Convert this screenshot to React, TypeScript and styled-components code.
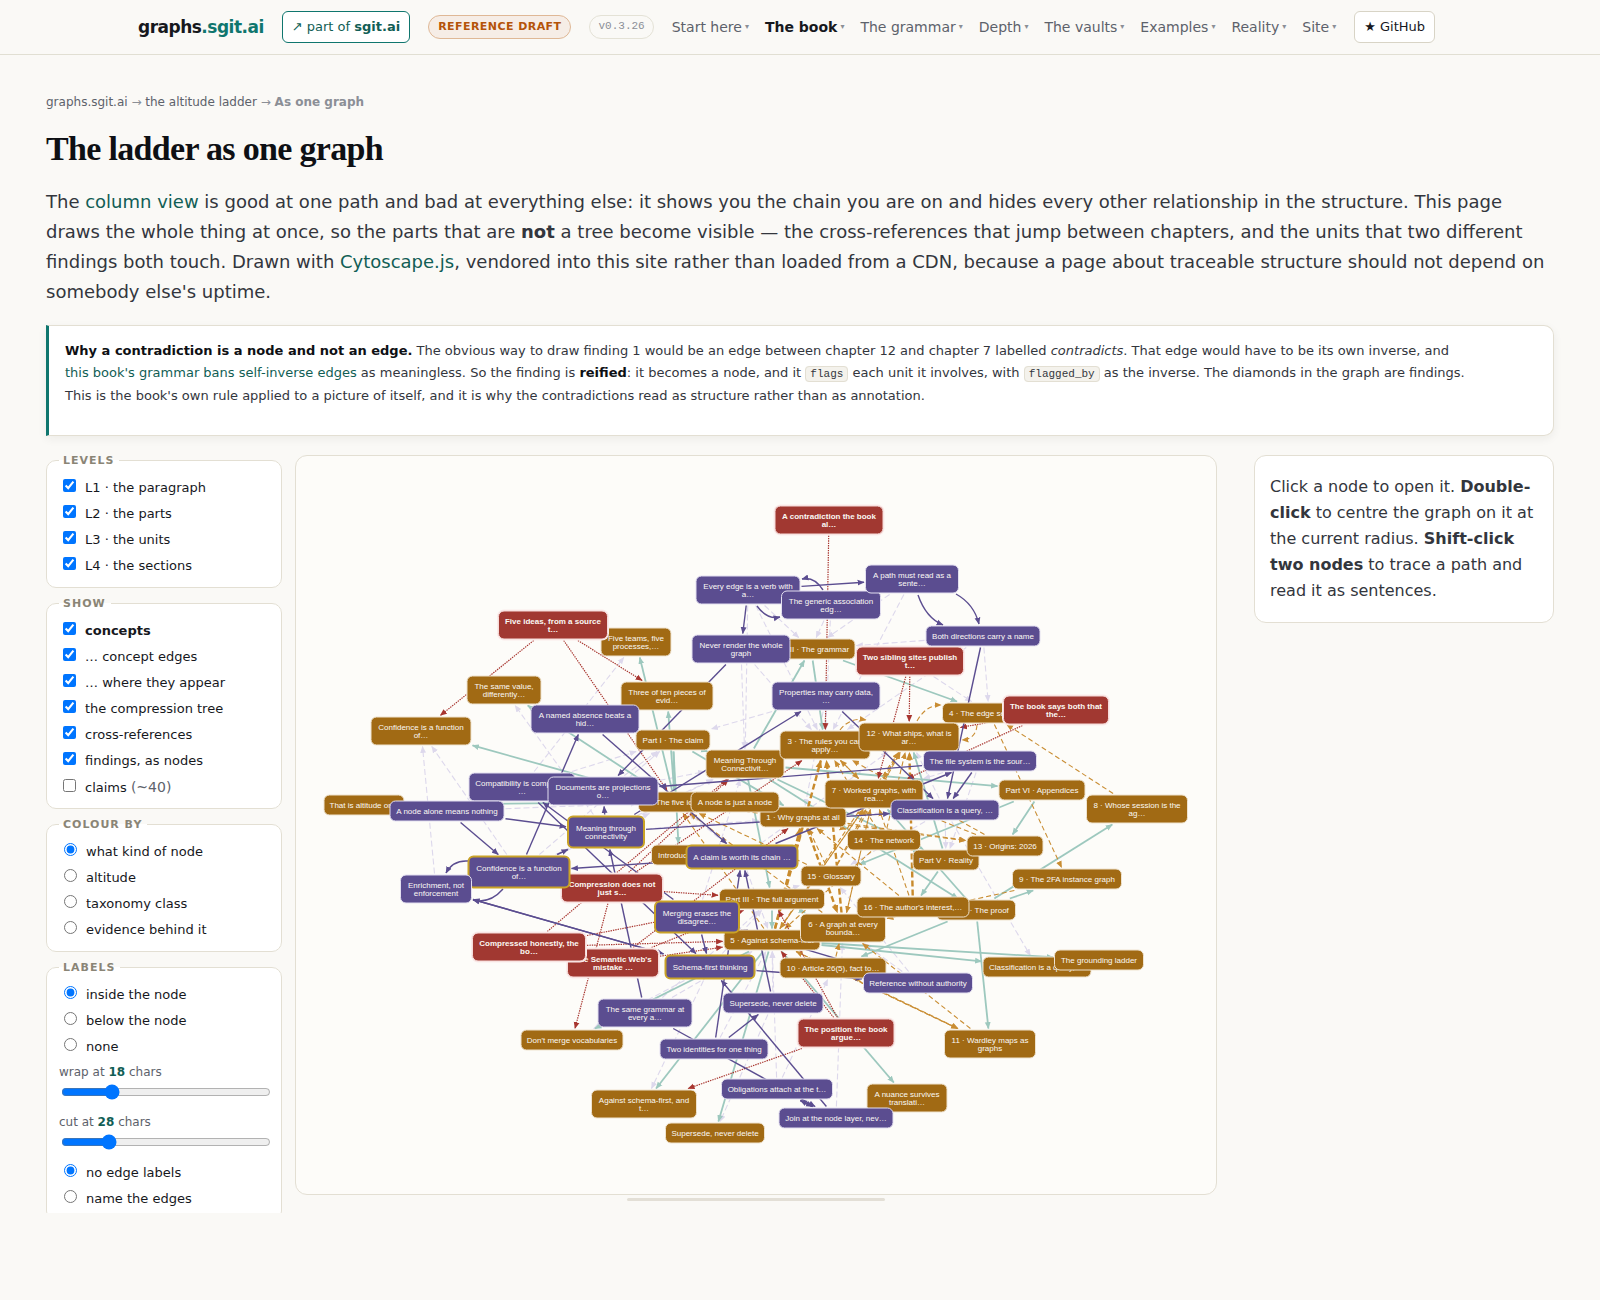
import React, { useState } from "react";
import styled, { createGlobalStyle, css } from "styled-components";

const sans = `"DejaVu Sans", "Liberation Sans", sans-serif`;
const mono = `"Liberation Mono", "DejaVu Sans Mono", monospace`;

const color = {
  page: "#faf9f6",
  card: "#ffffff",
  line: "#e3dfd3",
  ink: "#16181d",
  body: "#33363d",
  muted: "#5d626b",
  faint: "#8b8f96",
  teal: "#0f766e",
  tealDark: "#115e55",
};

const GlobalStyle = createGlobalStyle`
  *, *::before, *::after { box-sizing: border-box; }
  body {
    margin: 0;
    background: ${color.page};
    color: ${color.ink};
    font-family: ${sans};
    font-size: 16px;
    line-height: 26px;
  }
  a { color: ${color.tealDark}; text-decoration: none; }
`;

/* ---------- header ---------- */

const Header = styled.header`
  border-bottom: 1px solid #e1dfd3;
`;

const HeaderInner = styled.div`
  display: flex;
  align-items: center;
  gap: 18px;
  max-width: 1324px;
  margin: 0 auto;
  padding: 11px 0;
  white-space: nowrap;
`;

const Brand = styled.a`
  color: ${color.ink};
  font-size: 17px;
  font-weight: 700;
  line-height: 26px;
  letter-spacing: -0.03em;
  span { color: ${color.teal}; }
`;

const HeaderButton = styled.a<{ $accent?: boolean }>`
  display: inline-flex;
  align-items: center;
  height: 32px;
  padding: 0 9px;
  border: 1px solid ${(p) => (p.$accent ? color.teal : "#d8d4c6")};
  border-radius: 6px;
  background: ${color.card};
  color: ${(p) => (p.$accent ? color.tealDark : color.ink)};
  font-size: 13px;
  white-space: pre;
`;

const Pill = styled.span<{ $draft?: boolean }>`
  height: 24px;
  padding: 0 8px;
  border: 1px solid #e4e2d6;
  border-radius: 12px;
  color: ${color.faint};
  font-family: ${mono};
  font-size: 11px;
  line-height: 21px;
  ${(p) =>
    p.$draft &&
    css`
      padding: 0 9px;
      border-color: #dfb896;
      background: #f6ede6;
      color: #b45309;
      font-family: ${sans};
      font-weight: 700;
      letter-spacing: 0.04em;
    `}
`;

const Nav = styled.nav`
  display: flex;
  gap: 16px;
`;

const NavLink = styled.a<{ $active?: boolean }>`
  display: flex;
  align-items: center;
  gap: 3px;
  color: ${(p) => (p.$active ? color.ink : color.muted)};
  font-size: 14px;
  font-weight: ${(p) => (p.$active ? 700 : 400)};
  &::after {
    content: "▾";
    color: ${color.faint};
    font-size: 8px;
    font-weight: 400;
  }
`;

/* ---------- page head ---------- */

const Main = styled.main`
  padding: 37px 46px 87px;
`;

const Breadcrumb = styled.nav`
  color: ${color.faint};
  font-size: 12px;
  line-height: 20px;
  a { color: ${color.muted}; }
`;

const Title = styled.h1`
  margin: 17px 0 18px;
  color: #0e1014;
  font-family: "Liberation Serif", serif;
  font-size: 34px;
  line-height: 40px;
  letter-spacing: -0.02em;
`;

const Lead = styled.p`
  margin: 0;
  color: ${color.body};
  font-size: 18px;
  line-height: 30px;
`;

const Callout = styled.aside`
  margin: 18px 0 19px;
  padding: 14px 80px 28px 16px;
  border: 1px solid ${color.line};
  border-left: 3px solid ${color.teal};
  border-radius: 0 10px 10px 0;
  background: ${color.card};
  box-shadow: 0 3px 10px rgba(30, 30, 20, 0.06);
  color: ${color.body};
  font-size: 13px;
  line-height: 22px;
  b { color: #0e1014; }
  p { margin: 0; }
`;

const Code = styled.code`
  padding: 1px 4px;
  border: 1px solid ${color.line};
  border-radius: 4px;
  background: #f4f2ec;
  font-family: ${mono};
  font-size: 11px;
`;

/* ---------- workspace ---------- */

const Workspace = styled.div`
  display: grid;
  grid-template-columns: 236px minmax(0, 1fr) 300px;
  gap: 13px;
  align-items: start;
`;

const Controls = styled.form`
  display: flex;
  flex-direction: column;
  gap: 10px;
  height: 758px;
  overflow: hidden;
`;

const Group = styled.fieldset`
  flex: none;
  min-width: 0;
  margin: 0;
  padding: 9px 12px 8px;
  border: 1px solid ${color.line};
  border-radius: 10px;
  background: ${color.card};
`;

const Legend = styled.legend`
  padding: 0 5px 0 4px;
  color: #8a8576;
  font-size: 11px;
  font-weight: 700;
  line-height: 11px;
  letter-spacing: 1px;
  text-transform: uppercase;
`;

const Option = styled.label<{ $strong?: boolean }>`
  display: flex;
  align-items: baseline;
  gap: 6px;
  height: 26px;
  font-size: 13px;
  line-height: 26px;
  font-weight: ${(p) => (p.$strong ? 700 : 400)};
  small { color: ${color.muted}; font-size: 14px; }
`;

const SliderLabel = styled.label`
  display: block;
  padding: 2px 0 8px;
  color: ${color.muted};
  font-size: 12px;
  line-height: 20px;
  b { color: ${color.tealDark}; }
`;

const Range = styled.input`
  display: block;
  width: 100%;
  height: 16px;
  margin: 2px;
`;

const StageColumn = styled.section`
  margin-right: 24px;
`;

const Stage = styled.div`
  display: flex;
  justify-content: center;
  height: 740px;
  overflow: hidden;
  border: 1px solid ${color.line};
  border-radius: 12px;
  background: #fdfcf9;
`;

const Canvas = styled.div`
  position: relative;
  flex: none;
  width: 920px;
  height: 738px;
`;

const EdgeLayer = styled.svg`
  display: block;
  width: 920px;
  height: 738px;
`;

const Grip = styled.div`
  width: 28%;
  height: 3px;
  margin: 3px auto 0;
  border-radius: 2px;
  background: #e3dfd6;
`;

const Detail = styled.aside`
  padding: 18px 15px;
  border: 1px solid ${color.line};
  border-radius: 12px;
  background: ${color.card};
  color: ${color.body};
  p { margin: 0; }
`;

/* ---------- graph ---------- */

type Kind = "unit" | "finding" | "concept" | "core";

const fill: Record<Kind, string> = {
  unit: "#a16a14",
  finding: "#a13831",
  concept: "#5b4d90",
  core: "#5b4d90",
};

const frame: Record<Kind, string> = {
  unit: "#efe3cf",
  finding: "#f6dcda",
  concept: "#e3dff0",
  core: "#c9a227",
};

const NodeBox = styled.div<{ $kind: Kind }>`
  position: absolute;
  display: flex;
  align-items: center;
  justify-content: center;
  transform: translate(-50%, -50%);
  border: ${(p) => (p.$kind === "core" ? 2 : 1)}px solid ${(p) => frame[p.$kind]};
  border-radius: 6px;
  background: ${(p) => fill[p.$kind]};
  box-shadow: ${(p) => (p.$kind === "finding" ? "0 0 0 1px #fbeceb" : "none")};
  color: #fbf9f4;
  font-family: "Liberation Sans", Arial, sans-serif;
  font-size: 8px;
  font-weight: ${(p) => (p.$kind === "finding" ? 700 : 400)};
  line-height: 8px;
  text-align: center;
  white-space: pre;
`;

interface GraphNode {
  id: string;
  kind: Kind;
  x: number;
  y: number;
  w: number;
  h: number;
  label: string;
}

// Model coordinates are offset from the canvas by this pan.
const PAN = { x: 296, y: 456 };

type Row = [string, number, number, number, string];

const unitRows: Row[] = [
  ["ft", 636, 642, 71, "Five teams, five\nprocesses,…"],
  ["sv", 504, 690, 75, "The same value,\ndifferently…"],
  ["cfB", 421, 731, 101, "Confidence is a function\nof…"],
  ["alt", 364, 805, 81, "That is altitude only"],
  ["p2", 811, 649, 89, "Part II · The grammar"],
  ["th", 667, 696, 93, "Three of ten pieces of\nevid…"],
  ["p1", 673, 740, 75, "Part I · The claim"],
  ["mtB", 745, 764, 79, "Meaning Through\nConnectivit…"],
  ["c3", 825, 745, 91, "3 · The rules you can\napply…"],
  ["c4", 989, 713, 94, "4 · The edge sentence"],
  ["c12", 909, 737, 101, "12 · What ships, what is\nar…"],
  ["c2", 675, 802, 74, "2 · The five ideas"],
  ["c1", 803, 817, 87, "1 · Why graphs at all"],
  ["njn", 735, 802, 89, "A node is just a node"],
  ["c7", 874, 794, 99, "7 · Worked graphs, with\nrea…"],
  ["p6", 1042, 790, 87, "Part VI · Appendices"],
  ["c8", 1137, 809, 102, "8 · Whose session is the\nag…"],
  ["intro", 679, 855, 56, "Introduction"],
  ["c14", 884, 840, 74, "14 · The network"],
  ["p5", 946, 860, 67, "Part V · Reality"],
  ["c13", 1005, 846, 77, "13 · Origins: 2026"],
  ["c15", 831, 876, 61, "15 · Glossary"],
  ["c9", 1067, 879, 110, "9 · The 2FA instance graph"],
  ["p3", 772, 899, 106, "Part III · The full argument"],
  ["c5", 772, 940, 97, "5 · Against schema-first"],
  ["p4", 976, 910, 80, "Part IV · The proof"],
  ["c6", 843, 928, 86, "6 · A graph at every\nbounda…"],
  ["c16", 913, 907, 113, "16 · The author's interest,…"],
  ["c10", 833, 968, 107, "10 · Article 26(5), fact to…"],
  ["clB", 1037, 967, 109, "Classification is a query, …"],
  ["gl", 1099, 960, 90, "The grounding ladder"],
  ["dm", 572, 1040, 103, "Don't merge vocabularies"],
  ["asf", 644, 1104, 106, "Against schema-first, and\nt…"],
  ["sdB", 715, 1133, 100, "Supersede, never delete"],
  ["nu", 907, 1098, 81, "A nuance survives\ntranslati…"],
  ["c11", 990, 1044, 92, "11 · Wardley maps as\ngraphs"],
];

const findingRows: Row[] = [
  ["con", 829, 520, 109, "A contradiction the book\nal…"],
  ["fi", 553, 625, 110, "Five ideas, from a source\nt…"],
  ["tss", 910, 661, 108, "Two sibling sites publish\nt…"],
  ["bsb", 1056, 710, 106, "The book says both that\nthe…"],
  ["cdn", 612, 888, 102, "Compression does not\njust s…"],
  ["sw", 613, 963, 92, "The Semantic Web's\nmistake …"],
  ["ch", 529, 947, 114, "Compressed honestly, the\nbo…"],
  ["pos", 846, 1033, 97, "The position the book\nargue…"],
];

const conceptRows: Row[] = [
  ["ev", 748, 590, 105, "Every edge is a verb with\na…"],
  ["gen", 831, 605, 100, "The generic association\nedg…"],
  ["path", 912, 579, 94, "A path must read as a\nsente…"],
  ["both", 983, 636, 115, "Both directions carry a name"],
  ["nr", 741, 649, 99, "Never render the whole\ngraph"],
  ["prop", 826, 696, 109, "Properties may carry data,\n…"],
  ["na", 585, 719, 109, "A named absence beats a\nhid…"],
  ["cmp", 522, 787, 107, "Compatibility is computed,\n…"],
  ["doc", 603, 791, 111, "Documents are projections\no…"],
  ["an", 447, 811, 115, "A node alone means nothing"],
  ["fs", 980, 761, 114, "The file system is the sour…"],
  ["clq", 945, 810, 109, "Classification is a query, …"],
  ["ref", 918, 983, 110, "Reference without authority"],
  ["sg", 645, 1013, 95, "The same grammar at\nevery a…"],
  ["sd", 773, 1003, 101, "Supersede, never delete"],
  ["ti", 714, 1049, 109, "Two identities for one thing"],
  ["ob", 777, 1089, 112, "Obligations attach at the t…"],
  ["jn", 836, 1118, 115, "Join at the node layer, nev…"],
];

const coreRows: Row[] = [
  ["mt", 606, 832, 78, "Meaning through\nconnectivity"],
  ["cf", 519, 872, 103, "Confidence is a function\nof…"],
  ["ac", 742, 857, 113, "A claim is worth its chain …"],
  ["me", 697, 917, 86, "Merging erases the\ndisagree…"],
  ["sf", 710, 967, 91, "Schema-first thinking"],
];

const lateRows: Row[] = [["en", 436, 889, 72, "Enrichment, not\nenforcement"]];

const toNodes = (rows: Row[], kind: Kind): GraphNode[] =>
  rows.map(([id, x, y, w, label]) => ({
    id,
    kind,
    x: x - PAN.x,
    y: y - PAN.y,
    w,
    h: (label.includes("\n") ? 29 : 21) + (kind === "core" ? 4 : 0),
    label,
  }));

const nodes: GraphNode[] = [
  ...toNodes(unitRows, "unit"),
  ...toNodes(findingRows, "finding"),
  ...toNodes(conceptRows, "concept"),
  ...toNodes(coreRows, "core"),
  ...toNodes(lateRows, "concept"),
];

const byId = new Map(nodes.map((n) => [n.id, n]));

interface EdgeStyle {
  stroke: string;
  width: number;
  arrow: number;
  dash?: string;
}

const edgeStyles: Record<string, EdgeStyle> = {
  appears: { stroke: "#ddd8ec", width: 1.1, arrow: 7, dash: "6 3" },
  xref: { stroke: "#c98d33", width: 1.1, arrow: 7, dash: "5 3" },
  xrefBold: { stroke: "#c88a2c", width: 2.4, arrow: 8, dash: "6 3" },
  tree: { stroke: "#9dc8be", width: 1.8, arrow: 7 },
  flags: { stroke: "#a8352f", width: 1.2, arrow: 7, dash: "1.4 1" },
  concept: { stroke: "#5b4d90", width: 1.4, arrow: 7 },
};

// Straight edges as "source>target" pairs.
const edgeLists: [string, string][] = [
  [
    "appears",
    "en>cfB cf>cfB mt>sv cmp>ft cmp>p1 an>c2 cf>c2 cf>mtB mt>mtB cf>p1 prop>p1 ev>mtB nr>mtB ev>c3 gen>c3 prop>c3 path>c3 nr>c3 gen>p2 ev>p2 path>p2 both>p2 both>c4 tss>c4 both>c3 clq>c12 fs>c12 fs>p5 clq>p5 clq>c15 clq>c1 clq>clB ac>c12 ac>c2 me>c5 me>p3 sf>asf sf>dm sg>c5 sg>p3 sd>c5 ti>c5 ob>c10 jn>c6 ref>c6 ref>c15 sd>sdB sf>p3 me>mtB doc>p1 doc>mtB fs>c7 ac>c5 mt>c1 doc>c1 prop>c1 me>c15 ob>c5",
  ],
  [
    "tree",
    "mtB>p1 mtB>p2 mtB>p3 mtB>p4 mtB>p5 mtB>p6 p1>intro p1>c1 p1>c2 c2>th c2>ft c2>sv c2>cfB c2>alt p2>c3 p2>c4 p5>c12 p5>c16 p5>c14 p6>c13 p6>c15 p4>c8 p4>c9 p4>c7 p4>c10 p4>c11 p3>c5 p3>c6 c5>clB c5>gl c5>asf c5>sdB c5>dm c5>nu",
  ],
  [
    "xref",
    "c8>c4 c4>c9 c13>c3 c14>c3 c7>c3 c3>c7 c16>c7 c7>c12 c14>c12 c15>c12 c5>c12 c6>c7 c5>c7 c15>c7 c7>c6 c15>c1 c1>c14 c1>c13 c2>c13 c5>c2 c6>c2 c15>c2 c1>c2 c11>c5 c5>c11 c10>c11 c11>c6 c9>c6 c16>c1 c10>c6 c7>c5 c12>c7 c13>c7 c14>c5",
  ],
  ["xrefBold", "c16>c12 c6>c3 c5>c3 c5>c1 c1>c6"],
  [
    "flags",
    "con>c3 tss>c12 tss>c7 bsb>c12 bsb>c7 fi>cfB fi>th fi>c2 cdn>p3 cdn>mtB cdn>c3 ch>mtB ch>p3 ch>c5 sw>c1 sw>c5 sw>p3 cdn>dm pos>asf pos>c5 pos>p3",
  ],
  [
    "concept",
    "ev>path ev>nr both>clq fs>clq prop>clq ac>fs mt>clq fs>doc nr>doc na>ac mt>prop cf>na an>mt an>cf sf>en en>sf ac>cf cf>mt mt>doc me>cmp cmp>sf me>sf sg>mt ti>ac sd>ac ti>sd jn>sf sg>jn ob>jn jn>ob sf>ref ref>me",
  ],
];

const curves: [string, string][] = [
  ["concept", "M823 590Q814 576 802 579"],
  ["concept", "M757 606Q767 620 780 617"],
  ["concept", "M918 595Q926 618 943 625"],
  ["concept", "M956 594Q974 604 979 624"],
  ["concept", "M468 861Q453 860 446 873"],
  ["concept", "M503 889Q490 904 473 900"],
  ["xref", "M917 721Q926 705 941 705"],
  ["xref", "M977 725Q976 739 962 740"],
  ["xref", "M840 730Q850 717 866 720"],
];

function exitPoint(n: GraphNode, tx: number, ty: number, gap: number) {
  const dx = tx - n.x;
  const dy = ty - n.y;
  const scale = Math.min(
    (n.w / 2 + gap) / Math.max(Math.abs(dx), 0.001),
    (n.h / 2 + gap) / Math.max(Math.abs(dy), 0.001),
  );
  return { x: n.x + dx * scale, y: n.y + dy * scale };
}

function edgePath(pair: string) {
  const [from, to] = pair.split(">");
  const a = byId.get(from)!;
  const b = byId.get(to)!;
  const start = exitPoint(a, b.x, b.y, 1);
  const end = exitPoint(b, a.x, a.y, 1);
  return `M${start.x.toFixed(1)} ${start.y.toFixed(1)}L${end.x.toFixed(1)} ${end.y.toFixed(1)}`;
}

function Edges() {
  return (
    <EdgeLayer viewBox="0 0 920 738" aria-hidden="true">
      <defs>
        {Object.entries(edgeStyles).map(([name, s]) => (
          <marker
            key={name}
            id={`arrow-${name}`}
            viewBox="0 0 6 6"
            refX="5.5"
            refY="3"
            markerWidth={s.arrow}
            markerHeight={s.arrow}
            markerUnits="userSpaceOnUse"
            orient="auto"
          >
            <path d="M0 0.5L6 3L0 5.5Z" fill={s.stroke} />
          </marker>
        ))}
      </defs>
      {edgeLists.map(([name, list]) => {
        const s = edgeStyles[name];
        return (
          <g key={name} fill="none" stroke={s.stroke} strokeWidth={s.width} strokeDasharray={s.dash}>
            {list.split(" ").map((pair) => (
              <path key={pair} d={edgePath(pair)} markerEnd={`url(#arrow-${name})`} />
            ))}
          </g>
        );
      })}
      <g fill="none" transform={`translate(${-PAN.x} ${-PAN.y})`}>
        {curves.map(([name, d]) => {
          const s = edgeStyles[name];
          return (
            <path
              key={d}
              d={d}
              stroke={s.stroke}
              strokeWidth={s.width}
              strokeDasharray={s.dash}
              markerEnd={`url(#arrow-${name})`}
            />
          );
        })}
      </g>
    </EdgeLayer>
  );
}

function Graph() {
  return (
    <Canvas>
      <Edges />
      {nodes.map((n) => (
        <NodeBox key={n.id} $kind={n.kind} style={{ left: n.x, top: n.y, width: n.w, height: n.h }}>
          {n.label}
        </NodeBox>
      ))}
    </Canvas>
  );
}

/* ---------- controls ---------- */

interface RadioGroupProps {
  name: string;
  options: string[];
}

function Radios({ name, options }: RadioGroupProps) {
  return (
    <>
      {options.map((text, i) => (
        <Option key={text}>
          <input type="radio" name={name} defaultChecked={i === 0} />
          <span>{text}</span>
        </Option>
      ))}
    </>
  );
}

interface SliderProps {
  verb: string;
  initial: number;
  min: number;
  max: number;
}

function Slider({ verb, initial, min, max }: SliderProps) {
  const [value, setValue] = useState(initial);
  return (
    <SliderLabel>
      {verb} at <b>{value}</b> chars
      <Range
        type="range"
        min={min}
        max={max}
        value={value}
        onChange={(e) => setValue(Number(e.target.value))}
      />
    </SliderLabel>
  );
}

const levels = ["L1 · the paragraph", "L2 · the parts", "L3 · the units", "L4 · the sections"];
const shown = [
  "… concept edges",
  "… where they appear",
  "the compression tree",
  "cross-references",
  "findings, as nodes",
];
const navItems = ["Start here", "The book", "The grammar", "Depth", "The vaults", "Examples", "Reality", "Site"];

export default function App() {
  return (
    <>
      <GlobalStyle />
      <Header>
        <HeaderInner>
          <Brand href="#">
            graphs<span>.sgit.ai</span>
          </Brand>
          <HeaderButton href="#" $accent>
            ↗ part of <b>sgit.ai</b>
          </HeaderButton>
          <Pill $draft>REFERENCE DRAFT</Pill>
          <Pill>v0.3.26</Pill>
          <Nav>
            {navItems.map((item) => (
              <NavLink key={item} href="#" $active={item === "The book"}>
                {item}
              </NavLink>
            ))}
          </Nav>
          <HeaderButton href="#">★ GitHub</HeaderButton>
        </HeaderInner>
      </Header>
      <Main>
        <Breadcrumb>
          <a href="#">graphs.sgit.ai</a> → <a href="#">the altitude ladder</a> → <b>As one graph</b>
        </Breadcrumb>
        <Title>The ladder as one graph</Title>
        <Lead>
          The <a href="#">column view</a> is good at one path and bad at everything else: it shows you the chain
          you are on and hides every other relationship in the structure. This page draws the whole thing at once,
          so the parts that are <b>not</b> a tree become visible — the cross-references that jump between
          chapters, and the units that two different findings both touch. Drawn with <a href="#">Cytoscape.js</a>,
          vendored into this site rather than loaded from a CDN, because a page about traceable structure should
          not depend on somebody else's uptime.
        </Lead>
        <Callout>
          <p>
            <b>Why a contradiction is a node and not an edge.</b> The obvious way to draw finding 1 would be an
            edge between chapter 12 and chapter 7 labelled <em>contradicts</em>. That edge would have to be its
            own inverse, and <a href="#">this book's grammar bans self-inverse edges</a> as meaningless. So the
            finding is <b>reified</b>: it becomes a node, and it <Code>flags</Code> each unit it involves, with{" "}
            <Code>flagged_by</Code> as the inverse. The diamonds in the graph are findings. This is the book's own
            rule applied to a picture of itself, and it is why the contradictions read as structure rather than as
            annotation.
          </p>
        </Callout>
        <Workspace>
          <Controls>
            <Group>
              <Legend>Levels</Legend>
              {levels.map((text) => (
                <Option key={text}>
                  <input type="checkbox" defaultChecked />
                  <span>{text}</span>
                </Option>
              ))}
            </Group>
            <Group>
              <Legend>Show</Legend>
              <Option $strong>
                <input type="checkbox" defaultChecked />
                <span>concepts</span>
              </Option>
              {shown.map((text) => (
                <Option key={text}>
                  <input type="checkbox" defaultChecked />
                  <span>{text}</span>
                </Option>
              ))}
              <Option>
                <input type="checkbox" />
                <span>
                  claims <small>(~40)</small>
                </span>
              </Option>
            </Group>
            <Group>
              <Legend>Colour by</Legend>
              <Radios
                name="colour"
                options={["what kind of node", "altitude", "taxonomy class", "evidence behind it"]}
              />
            </Group>
            <Group>
              <Legend>Labels</Legend>
              <Radios name="labels" options={["inside the node", "below the node", "none"]} />
              <Slider verb="wrap" initial={18} min={10} max={46} />
              <Slider verb="cut" initial={28} min={12} max={90} />
              <Radios name="edges" options={["no edge labels", "name the edges"]} />
            </Group>
          </Controls>
          <StageColumn>
            <Stage>
              <Graph />
            </Stage>
            <Grip />
          </StageColumn>
          <Detail>
            <p>
              Click a node to open it. <b>Double-click</b> to centre the graph on it at the current radius.{" "}
              <b>Shift-click two nodes</b> to trace a path and read it as sentences.
            </p>
          </Detail>
        </Workspace>
      </Main>
    </>
  );
}
